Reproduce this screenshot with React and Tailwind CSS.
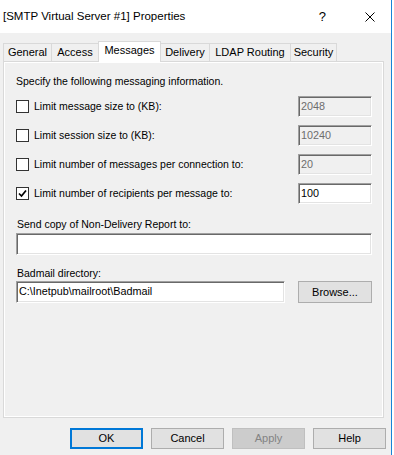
import React from 'react';

const font = { fontFamily: '"Liberation Sans", Arial, sans-serif' };

// caja de texto estilo Win32 (borde hundido)
function Field({ value = '', disabled = false, className = '' }) {
  return (
    <div
      className={`h-[21px] border border-t-[#a0a0a0] border-l-[#a0a0a0] border-r-white border-b-white shadow-[inset_1px_1px_0_#696969,inset_-1px_-1px_0_#e3e3e3] pl-[2px] pt-[2px] text-[10.8px] leading-[14px] ${
        disabled ? 'bg-[#f0f0f0] text-[#6d6d6d]' : 'bg-white text-black'
      } ${className}`}
    >
      {value}
    </div>
  );
}

function Check({ checked = false }) {
  return (
    <div className="w-[13px] h-[13px] border border-[#333333] bg-white shrink-0 flex items-center justify-center">
      {checked && (
        <svg width="11" height="11" viewBox="0 0 11 11">
          <polyline points="2,5.5 4.5,8 9,2.5" fill="none" stroke="#000" strokeWidth="1.7" />
        </svg>
      )}
    </div>
  );
}

function Button({ children, variant }) {
  const styles =
    variant === 'default'
      ? 'border-2 border-[#0078d7] bg-[#e1e1e1] text-black'
      : variant === 'disabled'
      ? 'border border-[#bfbfbf] bg-[#cccccc] text-[#838383]'
      : 'border border-[#adadad] bg-[#e1e1e1] text-black';
  return (
    <div className={`w-[73px] h-[21px] flex items-center justify-center text-[11px] ${styles}`}>
      {children}
    </div>
  );
}

const tabs = [
  { label: 'General', w: 'w-[49px]' },
  { label: 'Access', w: 'w-[48px]' },
  { label: 'Messages', w: 'w-[63px]', active: true },
  { label: 'Delivery', w: 'w-[50px]' },
  { label: 'LDAP Routing', w: 'w-[82px]' },
  { label: 'Security', w: 'w-[47px]' },
];

const rows = [
  { label: 'Limit message size to (KB):', value: '2048' },
  { label: 'Limit session size to (KB):', value: '10240' },
  { label: 'Limit number of messages per connection to:', value: '20' },
  { label: 'Limit number of recipients per message to:', value: '100', checked: true },
];

export default function App() {
  return (
    <div className="w-[394px] h-[455px] bg-white flex overflow-hidden" style={font}>
      <div className="w-[392px] h-full border-r border-[#1883d7] flex flex-col">
        {/* Barra de título */}
        <div className="h-[33px] bg-white flex items-center shrink-0">
          <span className="pl-[3px] text-[11.5px] text-black">[SMTP Virtual Server #1] Properties</span>
          <span className="ml-auto mr-[39px] text-[13px] text-black">?</span>
          <svg width="10" height="10" viewBox="0 0 10 10" className="mr-[16px]">
            <path d="M0.5 0.5 L9.5 9.5 M9.5 0.5 L0.5 9.5" stroke="#000" strokeWidth="1" />
          </svg>
        </div>

        <div className="flex-1 bg-[#f0f0f0] flex flex-col">
          {/* Pestañas */}
          <div className="flex items-end pl-[3px] pt-[7px] h-[28px] relative z-10">
            {tabs.map((t, i) => (
              <div
                key={t.label}
                className={`${t.w} ${i > 0 ? '-ml-px' : ''} ${
                  t.active
                    ? 'h-[21px] -mb-px bg-white pb-[3px]'
                    : 'h-[18px] bg-[#f0f0f0]'
                } border border-b-0 border-[#d9d9d9] flex items-center justify-center text-[11px] text-black`}
              >
                {t.label}
              </div>
            ))}
          </div>

          {/* Panel */}
          <div className="ml-[3px] w-[381px] h-[357px] border border-[#d9d9d9] shadow-[inset_1px_1px_0_#ffffff,inset_-1px_-1px_0_#ffffff] pl-[12px] pr-[11px] flex flex-col text-[10.5px]">
            <div className="mt-[13px] leading-[13px] text-black">
              Specify the following messaging information.
            </div>
            <div className="mt-[8px] flex flex-col gap-[8px]">
              {rows.map((r) => (
                <div key={r.label} className="h-[21px] flex items-center">
                  <Check checked={r.checked} />
                  <span className="ml-[5px] text-black">{r.label}</span>
                  <Field value={r.value} disabled={!r.checked} className="ml-auto w-[74px]" />
                </div>
              ))}
            </div>
            <div className="mt-[13px] pl-[1px] leading-[14px] text-black">
              Send copy of Non-Delivery Report to:
            </div>
            <Field className="mt-[2px] w-[356px] h-[22px]" />
            <div className="mt-[11px] pl-[1px] leading-[14px] text-black">Badmail directory:</div>
            <div className="mt-[1px] flex items-center">
              <Field value="C:\Inetpub\mailroot\Badmail" className="w-[269px] h-[22px]" />
              <div className="ml-auto w-[74px] h-[22px] border border-[#adadad] bg-[#e1e1e1] flex items-center justify-center text-[11px] text-black">
                Browse...
              </div>
            </div>
          </div>

          {/* Botones */}
          <div className="mt-[10px] flex justify-end gap-[8px] pr-[5px]">
            <Button variant="default">OK</Button>
            <Button>Cancel</Button>
            <Button variant="disabled">Apply</Button>
            <Button>Help</Button>
          </div>
        </div>
      </div>
    </div>
  );
}
